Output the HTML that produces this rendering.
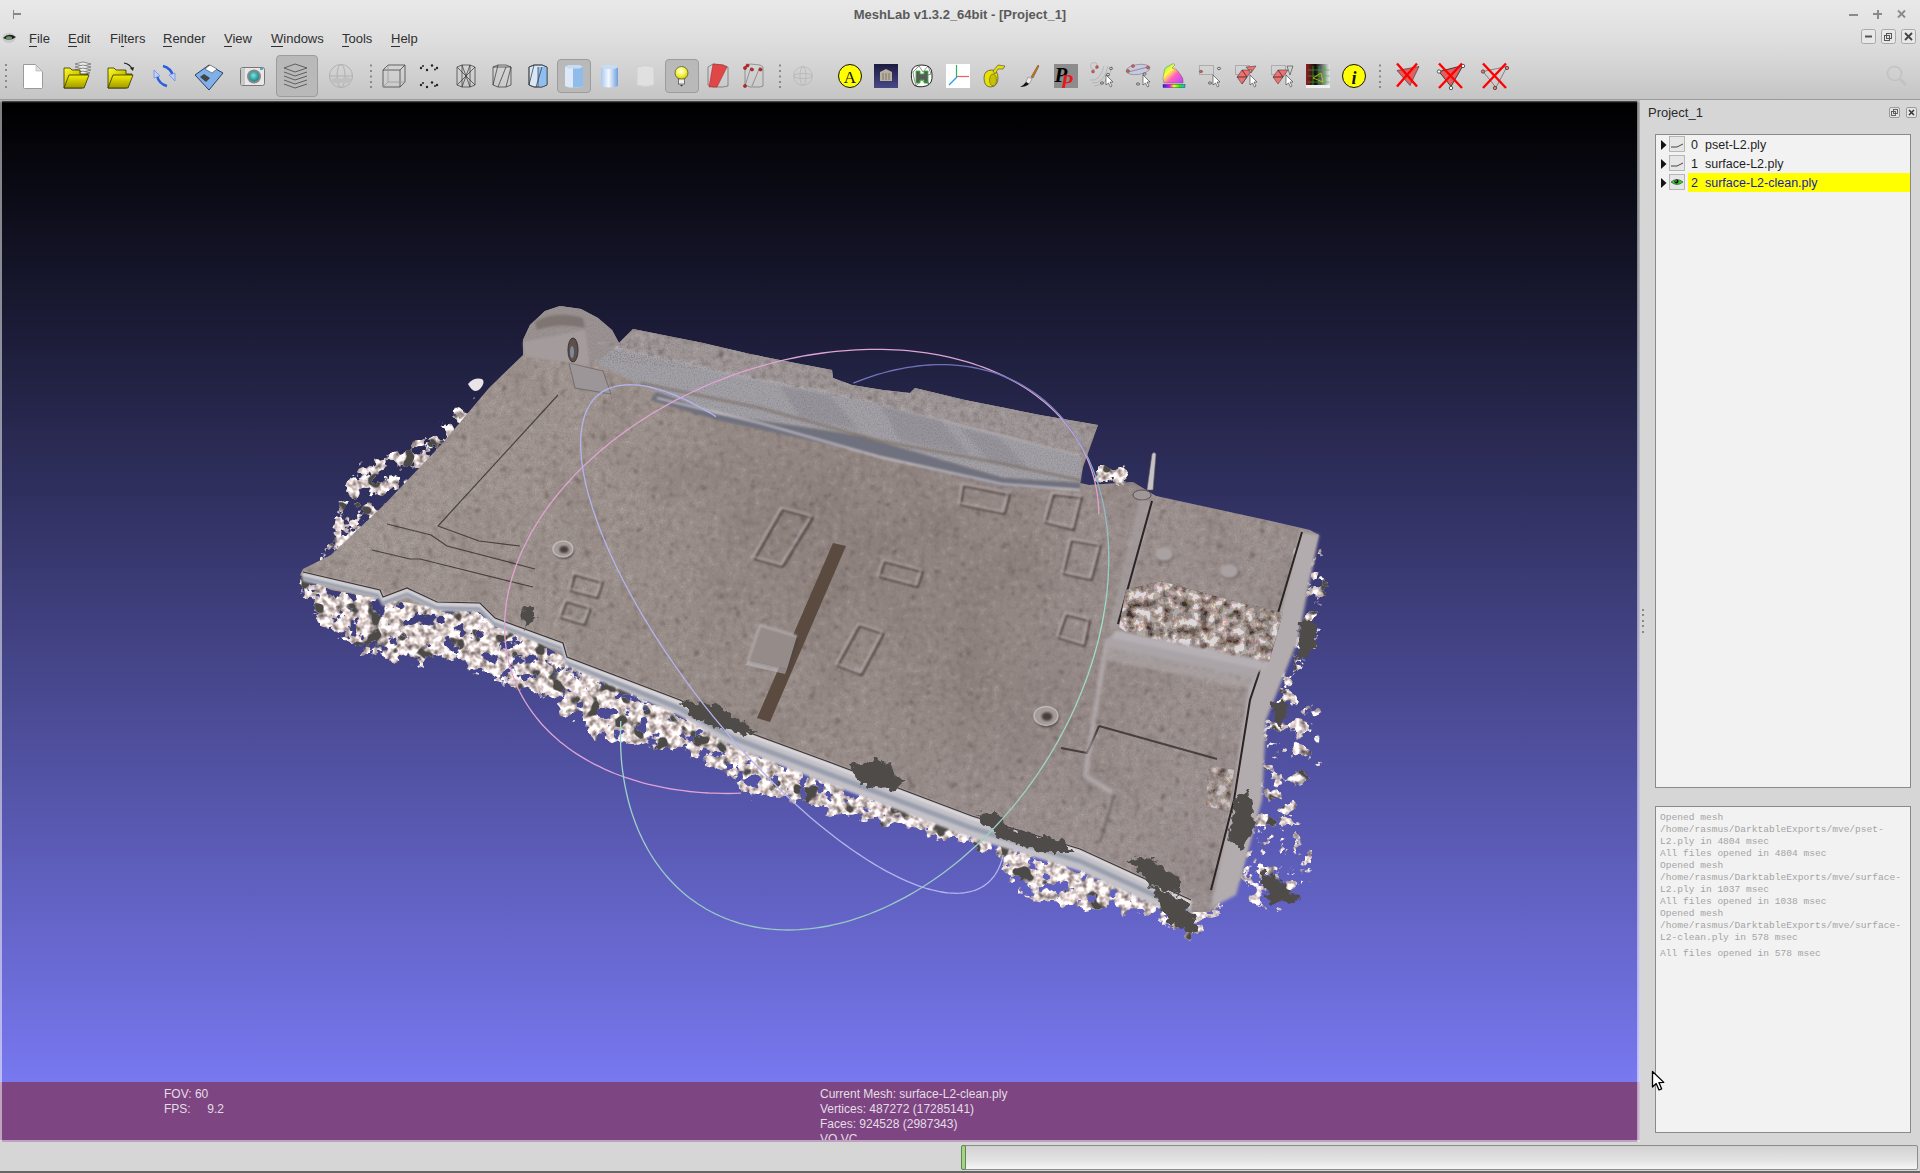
<!DOCTYPE html>
<html><head><meta charset="utf-8">
<style>
*{margin:0;padding:0;box-sizing:border-box}
html,body{width:1920px;height:1173px;overflow:hidden;background:#d6d6d6;font-family:"Liberation Sans",sans-serif}
.a{position:absolute}
#top{left:0;top:0;width:1920px;height:100px;background:linear-gradient(#e9e9e9 0px,#dedede 40px,#d2d2d2 70px,#c5c5c5 99px)}
#topline{left:0;top:99px;width:1920px;height:1px;background:#9c9c9c}
.title{left:0;top:7px;width:1920px;text-align:center;font-weight:bold;font-size:13px;color:#5a5a5a;letter-spacing:0px}
.menu{top:31px;font-size:13px;color:#303030}
.menu u{text-decoration:none;border-bottom:1px solid #303030}
#gl{left:0px;top:101px;width:1640px;height:1041px;background:linear-gradient(#000 2px,rgb(120,120,240) 981px,rgb(120,120,240))}
#glframe{left:0;top:100px;width:1640px;height:1043px;border:2px solid #b9b9b9;border-top:3px solid #a8a8a8}
#log{left:0px;top:1082px;width:1640px;height:60px;background:rgb(125,70,131)}
.lt{color:#e4dde4;font-size:12px;line-height:15px}
#panel{left:1640px;top:100px;width:280px;height:1042px;background:#d6d6d6}
.box{background:#f2f2f2;border:1px solid #8a8a8a}
.tree{font-size:12.5px;line-height:16px;color:#1e1e1e}
.mono{font-family:"Liberation Mono",monospace;font-size:9.57px;color:#a4a4a4;line-height:12px;white-space:pre}
#status{left:0;top:1142px;width:1920px;height:31px;background:#d6d6d6}
</style></head><body>
<div id="top" class="a"></div>
<div id="topline" class="a"></div>
<div class="a title">MeshLab v1.3.2_64bit - [Project_1]</div>
<div class="a" style="left:13px;top:10px;width:1px;height:9px;background:#888"></div>
<div class="a" style="left:14px;top:13px;width:7px;height:2px;background:#888"></div>
<!-- window controls -->
<div class="a" style="left:1849px;top:14px;width:9px;height:1.5px;background:#8a8a8a"></div>
<div class="a" style="left:1873px;top:13px;width:9px;height:2px;background:#8a8a8a"></div>
<div class="a" style="left:1876.5px;top:9.5px;width:2px;height:9px;background:#8a8a8a"></div>
<svg class="a" style="left:1896px;top:9px" width="12" height="12" viewBox="0 0 12 12"><g stroke="#8a8a8a" stroke-width="1.8"><line x1="2" y1="1.5" x2="9" y2="8.5"/><line x1="9" y1="1.5" x2="2" y2="8.5"/></g></svg>

<svg class="a" style="left:0;top:0" width="1920" height="100" viewBox="0 0 1920 100">
<defs>
<linearGradient id="fold" x1="0" y1="0" x2="1" y2="1"><stop offset="0" stop-color="#ffff30"/><stop offset="0.5" stop-color="#c8c000"/><stop offset="1" stop-color="#202000"/></linearGradient><linearGradient id="foldf" x1="0" y1="0" x2="0" y2="1"><stop offset="0" stop-color="#f4f000"/><stop offset="1" stop-color="#a09800"/></linearGradient>
<linearGradient id="cylb" x1="0" y1="0" x2="1" y2="0"><stop offset="0" stop-color="#a8c8f0"/><stop offset="0.45" stop-color="#f4f8ff"/><stop offset="1" stop-color="#6fa0dc"/></linearGradient>
<radialGradient id="bulb" cx="0.45" cy="0.35" r="0.6"><stop offset="0" stop-color="#ffffe8"/><stop offset="0.5" stop-color="#f8f860"/><stop offset="1" stop-color="#d8d000"/></radialGradient>
<radialGradient id="lens" cx="0.45" cy="0.4" r="0.6"><stop offset="0" stop-color="#80e0e0"/><stop offset="1" stop-color="#108888"/></radialGradient>
<linearGradient id="bun" x1="0" y1="0" x2="1" y2="1"><stop offset="0" stop-color="#40ff40"/><stop offset="0.35" stop-color="#ffff40"/><stop offset="0.6" stop-color="#ff60c0"/><stop offset="1" stop-color="#c040ff"/></linearGradient>
<linearGradient id="rainbow" x1="0" y1="0" x2="1" y2="0"><stop offset="0" stop-color="#2020ff"/><stop offset="0.3" stop-color="#ff00ff"/><stop offset="0.5" stop-color="#ffff00"/><stop offset="0.75" stop-color="#00ff00"/><stop offset="1" stop-color="#00c0ff"/></linearGradient>
<linearGradient id="dsq" x1="0" y1="0" x2="0" y2="1"><stop offset="0" stop-color="#1c1c40"/><stop offset="1" stop-color="#484888"/></linearGradient>
<linearGradient id="gridg" x1="0" y1="0" x2="1" y2="0"><stop offset="0" stop-color="#902020"/><stop offset="0.4" stop-color="#101010"/><stop offset="1" stop-color="#e8e8e8"/></linearGradient>
</defs>
<!-- grip -->
<g fill="#8a8a8a"><rect x="5" y="64" width="2" height="2"/><rect x="5" y="69" width="2" height="2"/><rect x="5" y="75" width="2" height="2"/><rect x="5" y="80" width="2" height="2"/><rect x="5" y="86" width="2" height="2"/></g>
<!-- new -->
<path d="M23.5,64.5 h12 l7,7 v16 q0,1 -1,1 h-17 q-1,0 -1,-1z" fill="#fff" stroke="#9a9a9a"/>
<path d="M36,65 v6 h6z" fill="#e0e0e0" stroke="#aaa" stroke-width="0.6"/>
<!-- open project -->
<g stroke="#666" stroke-width="0.7" fill="#eee"><path d="M75,64 l8,-2 l8,2 l-8,2z"/><path d="M75,67 l8,-2 l8,2 l-8,2z"/><path d="M75,70 l8,-2 l8,2 l-8,2z"/><path d="M76,73 l7,-2 l7,2 l-7,2z"/></g>
<path d="M64,68 h6 l2,2 h8 v4 h8 l-6,14 h-18z" fill="url(#fold)" stroke="#303000" stroke-width="0.8"/>
<path d="M64,88 l5,-13 h20 l-5,13z" fill="url(#foldf)" stroke="#303000" stroke-width="0.8"/>
<!-- open -->
<path d="M108,68 h6 l2,2 h10 v4 h6 l-6,14 h-18z" fill="url(#fold)" stroke="#303000" stroke-width="0.8"/>
<path d="M108,88 l5,-13 h20 l-5,13z" fill="url(#foldf)" stroke="#303000" stroke-width="0.8"/>
<path d="M124,63 q6,1 8,6" fill="none" stroke="#222" stroke-width="1.2"/><path d="M130,68 l3,3 l1,-4z" fill="#222"/>
<!-- reload -->
<path d="M163,66 q8,2 10,10" fill="none" stroke="#2a5ee0" stroke-width="2.5"/><path d="M169,75 l6,6 l0,-8z" fill="#b8d0ff" stroke="#5a7ad0" stroke-width="0.6"/>
<path d="M167,86 q-8,-2 -10,-10" fill="none" stroke="#2a5ee0" stroke-width="2.5"/><path d="M160,76 l-6,-6 l0,8z" fill="#b8d0ff" stroke="#5a7ad0" stroke-width="0.6"/>
<!-- save floppy -->
<path d="M195,75 l14,-10 l14,8 l-14,17z" fill="#7fb0ea" stroke="#203050" stroke-width="0.9"/>
<path d="M205,69 l5,-4 l7,4 l-5,4z" fill="#fff" stroke="#333" stroke-width="0.5"/>
<path d="M200,77 l4,-3 l6,4 l-4,4z" fill="#444"/>
<!-- camera -->
<rect x="240.5" y="67.5" width="24" height="18" rx="2" fill="#e8e8e8" stroke="#777"/>
<rect x="241" y="68" width="4" height="17" fill="#c8c8c8"/>
<circle cx="254" cy="76.5" r="7" fill="#888"/><circle cx="254" cy="76.5" r="5" fill="url(#lens)"/>
<rect x="260" y="68" width="3" height="2" fill="#5ac"/>
<!-- layers toggle -->
<rect x="276.5" y="55.5" width="41" height="41" rx="3.5" fill="#b9b9b9" stroke="#9c9c9c"/>
<g fill="none" stroke="#555" stroke-width="0.9"><path d="M284,68 l11,-4 l12,4 l-12,4z"/><path d="M284,72 l11,4 l12,-4"/><path d="M284,76 l11,4 l12,-4"/><path d="M284,80 l11,4 l12,-4"/><path d="M284,84 l11,4 l12,-4"/></g>
<!-- globe disabled -->
<g fill="none" stroke="#b0b0b0" stroke-width="1"><circle cx="341" cy="76" r="11.5"/><ellipse cx="341" cy="76" rx="4" ry="11.5"/><line x1="329.5" y1="76" x2="352.5" y2="76"/></g>
<path d="M331,80 q5,-4 10,-1 q5,-4 10,0 v4 h-20z" fill="#c0c0c0"/>
<!-- separator -->
<g fill="#8a8a8a"><rect x="370" y="64.5" width="2" height="2"/><rect x="370" y="70" width="2" height="2"/><rect x="370" y="75.5" width="2" height="2"/><rect x="370" y="81" width="2" height="2"/><rect x="370" y="86" width="2" height="2"/></g>
<!-- bbox -->
<g fill="none" stroke="#444" stroke-width="0.8"><path d="M383,70 l5,-5 h17 v17 l-5,5 h-17z"/><path d="M383,70 h17 l5,-5 M400,70 v17"/><path d="M388,65 v17 h17 M388,82 l-5,5" stroke="#999"/></g>
<!-- points -->
<g fill="#222"><circle cx="421" cy="68" r="1.2"/><circle cx="427" cy="70" r="1.2"/><circle cx="432" cy="65.5" r="1.2"/><circle cx="437" cy="68" r="1.2"/><circle cx="423" cy="66" r="1"/><circle cx="435" cy="69.5" r="1"/>
<circle cx="421" cy="85" r="1.2"/><circle cx="427" cy="87" r="1.2"/><circle cx="432" cy="82.5" r="1.2"/><circle cx="437" cy="85" r="1.2"/><circle cx="423" cy="83" r="1"/><circle cx="435" cy="86" r="1"/></g>
<!-- wire -->
<g fill="none" stroke="#333" stroke-width="0.7"><path d="M457,67 l5,-2 l8,0 l5,2 v18 l-5,2 h-8 l-5,-2z"/><path d="M457,67 l18,18 M475,67 l-18,18 M462,65 v22 M470,65 v22 M462,65 l8,22 M470,65 l-8,22"/></g>
<!-- flat lines -->
<g fill="none" stroke="#333" stroke-width="0.7"><path d="M493,67 l5,-2 l8,0 l5,2 v18 l-5,2 h-8 l-5,-2z"/><path d="M498,65 l-5,20 M506,67 l-8,20 M511,67 l-5,20 M493,67 l18,0"/></g>
<!-- flat blue -->
<path d="M529,67 l5,-2 l8,0 l5,2 v18 l-5,2 h-8 l-5,-2z" fill="#d8e8f8" stroke="#333" stroke-width="0.7"/>
<path d="M538,67 l9,0 v18 l-5,2 h-4z" fill="#8fbef0"/>
<g fill="none" stroke="#333" stroke-width="0.7"><path d="M529,67 l5,-2 l8,0 l5,2 v18 l-5,2 h-8 l-5,-2z"/><path d="M538,67 v20 M534,65 l-5,20 M542,67 l-6,20"/></g>
<!-- smooth toggle -->
<rect x="557.5" y="59.5" width="33" height="33" rx="3.5" fill="#b9b9b9" stroke="#9c9c9c"/>
<path d="M565,67 l4,-2 l10,0 l4,2 v19 l-4,1.5 h-10 l-4,-1.5z" fill="#dde9f7"/>
<path d="M573,66.5 h10 v19.5 l-4,1.5 h-6z" fill="#90bcec"/>
<path d="M565,67 l4,-2 l10,0 l4,2 l-4,1.5 h-10z" fill="#c8dcf4"/>
<!-- smooth cyl -->
<path d="M601,67 q8,-4 17,0 v19 q-8,3 -17,0z" fill="url(#cylb)"/>
<ellipse cx="609.5" cy="67" rx="8.5" ry="2" fill="#c8dcf4"/>
<!-- texture disabled -->
<path d="M637,67 q8,-3 17,0 v18 q-8,3 -17,0z" fill="#e0e0e0" stroke="#d0d0d0"/>
<!-- light toggle -->
<rect x="665.5" y="59.5" width="33" height="33" rx="3.5" fill="#b9b9b9" stroke="#9c9c9c"/>
<circle cx="681.5" cy="73" r="6.5" fill="url(#bulb)" stroke="#333" stroke-width="0.6"/>
<rect x="678.5" y="79" width="6" height="5" fill="#eee" stroke="#333" stroke-width="0.6"/><path d="M680,85 h3 l-1.5,1.5z" fill="#333"/>
<!-- red flat -->
<g fill="none" stroke="#555" stroke-width="0.6"><path d="M708,67 l5,-3 l10,1 l5,2 v19 l-5,1 h-10 l-5,-2z"/></g>
<path d="M713,64 l10,1 l4,2 l-10,20 h-8z" fill="#e04848" stroke="#a02020" stroke-width="0.5"/>
<!-- vertex sel -->
<g fill="none" stroke="#666" stroke-width="0.6"><path d="M745,67 l5,-3 l10,1 l3,2 v19 l-3,1 h-10 l-5,-2z M745,86 l6,-19 M752,86 l8,-19"/></g>
<g fill="#d02020" stroke="#600" stroke-width="0.4"><circle cx="745" cy="68" r="1.6"/><circle cx="747.5" cy="65.5" r="1.6"/><circle cx="752" cy="69.5" r="1.6"/><circle cx="760.5" cy="69.5" r="1.6"/><circle cx="745" cy="86" r="1.6"/></g>
<!-- separator -->
<g fill="#8a8a8a"><rect x="779" y="64.5" width="2" height="2"/><rect x="779" y="70" width="2" height="2"/><rect x="779" y="75.5" width="2" height="2"/><rect x="779" y="81" width="2" height="2"/><rect x="779" y="86" width="2" height="2"/></g>
<!-- globe2 disabled -->
<g fill="none" stroke="#b8b8b8" stroke-width="0.9"><circle cx="803" cy="76" r="9.3"/><ellipse cx="803" cy="76" rx="3" ry="9.3"/><ellipse cx="803" cy="76" rx="9.3" ry="2.5"/></g>
<!-- A -->
<circle cx="850" cy="76" r="11.5" fill="#ffff00" stroke="#111" stroke-width="1"/>
<text x="850" y="83" text-anchor="middle" font-family="Liberation Serif" font-size="17" fill="#111">A</text>
<!-- dark square -->
<rect x="874" y="64" width="24" height="24" fill="url(#dsq)"/>
<path d="M880,72 l6,-3 l6,3 v9 h-12z" fill="#b8b0a0"/><g stroke="#706858" stroke-width="0.8"><line x1="883" y1="73" x2="883" y2="80"/><line x1="886" y1="73" x2="886" y2="80"/><line x1="889" y1="73" x2="889" y2="80"/></g>
<!-- mesh H -->
<path d="M912,70 q2,-5 10,-5 q10,0 10,9 q1,10 -6,12 q-8,2 -12,-1 q-4,-6 -2,-15z" fill="#fff" stroke="#111" stroke-width="0.9"/>
<g stroke="#222" stroke-width="0.5" fill="none"><path d="M913,72 l6,-6 l4,6 l5,-6 l3,8 l-6,2 l4,8 l-8,-4 l-5,6 l-2,-8z"/></g>
<path d="M916,71 h4 v3 h4 v-3 h4 v12 h-4 v-3 h-4 v3 h-4z" fill="#5a5a5a" stroke="#30c030" stroke-width="0.9"/>
<!-- axes -->
<rect x="946" y="64" width="24" height="24" fill="#fff"/>
<line x1="956.5" y1="65" x2="956.5" y2="77" stroke="#30b060" stroke-width="1.2"/>
<line x1="957" y1="76.5" x2="969" y2="76.5" stroke="#f06060" stroke-width="1.2"/>
<line x1="957" y1="77" x2="949" y2="85" stroke="#20a0f0" stroke-width="1.3"/>
<!-- tape -->
<path d="M984,78 q0,-8 8,-8 q6,0 6,8 q0,8 -7,9 q-7,0 -7,-9z" fill="#e8e000" stroke="#444" stroke-width="0.7"/>
<path d="M993,71 l5,-6 l7,1 l-2,3 l-5,0 l-3,5z" fill="#e8e000" stroke="#444" stroke-width="0.6"/>
<ellipse cx="993" cy="80" rx="3.5" ry="6" fill="#c8c000" stroke="#444" stroke-width="0.5"/>
<!-- brush -->
<path d="M1038,65 l-7,12 l2,1 l6,-12z" fill="#c87820" stroke="#604010" stroke-width="0.5"/>
<path d="M1028,77 l4,2 l-3,5 l-3,-2z" fill="#eee" stroke="#666" stroke-width="0.5"/>
<path d="M1026,82 l3,2 q-3,3 -9,3 q4,-2 6,-5z" fill="#111"/>
<!-- PP -->
<rect x="1054" y="64" width="24" height="24" fill="#8c8c8c"/>
<clipPath id="ppc"><rect x="1054" y="64" width="24" height="24"/></clipPath><g clip-path="url(#ppc)"><text x="1054.5" y="82" font-family="Liberation Serif" font-style="italic" font-weight="bold" font-size="21" fill="#000">P</text>
<text x="1060.5" y="88.5" font-family="Liberation Serif" font-style="italic" font-weight="bold" font-size="20" fill="#e81818">P</text></g>
<!-- sel pts -->
<g fill="none" stroke="#aaa" stroke-width="0.7"><circle cx="1094" cy="66" r="3.5"/><path d="M1090,80 q10,2 14,-14 M1092,83 q12,1 16,-17 M1094,86 q14,0 18,-20"/></g>
<g fill="#e05050" stroke="#555" stroke-width="0.4"><circle cx="1097" cy="67" r="1.5"/><circle cx="1093" cy="71.5" r="1.5"/></g>
<g fill="none" stroke="#444" stroke-width="0.7"><ellipse cx="1111" cy="68.5" rx="1.6" ry="1.2"/><ellipse cx="1108" cy="74.5" rx="1.6" ry="1.2"/><ellipse cx="1102" cy="83" rx="1.6" ry="1.2"/></g>
<path d="M1106,75 v10 l2.5,-2 l2,4 l1.5,-1 l-2,-4 h3z" fill="#fff" stroke="#333" stroke-width="0.6"/>
<!-- ellipse sel -->
<ellipse cx="1138" cy="69.5" rx="12" ry="5" transform="rotate(-8 1138 69.5)" fill="#c8c8e0" stroke="#888" stroke-width="0.7"/>
<line x1="1128" y1="72" x2="1148" y2="67" stroke="#555" stroke-width="0.5"/>
<g fill="#e05050" stroke="#555" stroke-width="0.4"><circle cx="1133" cy="66" r="1.6"/><circle cx="1148" cy="67.5" r="1.6"/><circle cx="1128" cy="71" r="1.6"/></g>
<g fill="none" stroke="#444" stroke-width="0.7"><ellipse cx="1144.5" cy="74" rx="1.6" ry="1.2"/><ellipse cx="1138" cy="84" rx="1.6" ry="1.2"/></g>
<path d="M1143,75 v10 l2.5,-2 l2,4 l1.5,-1 l-2,-4 h3z" fill="#fff" stroke="#333" stroke-width="0.6"/>
<!-- bunny -->
<path d="M1164,73 q0,-6 5,-7 l3,-2 q2,-1 3,1 l-3,3 q5,0 8,6 q4,4 3,9 h-19 q-2,-4 0,-10z" fill="url(#bun)" stroke="#555" stroke-width="0.4"/>
<rect x="1163" y="84.5" width="22" height="3" fill="url(#rainbow)" stroke="#224" stroke-width="0.4"/>
<!-- rect sel -->
<rect x="1199.5" y="65.5" width="14" height="9" fill="none" stroke="#666" stroke-width="0.7" stroke-dasharray="1,1"/>
<ellipse cx="1201" cy="71.5" rx="1.6" ry="1.2" fill="#e05050" stroke="#555" stroke-width="0.5"/>
<g fill="none" stroke="#444" stroke-width="0.7"><ellipse cx="1219" cy="68.5" rx="1.6" ry="1.2"/><ellipse cx="1210" cy="83" rx="1.6" ry="1.2"/></g>
<path d="M1213,75 v10 l2.5,-2 l2,4 l1.5,-1 l-2,-4 h3z" fill="#fff" stroke="#333" stroke-width="0.6"/>
<!-- face sel 1 -->
<rect x="1235.5" y="65.5" width="14" height="9" fill="none" stroke="#666" stroke-width="0.7" stroke-dasharray="1,1"/>
<path d="M1237,77 l5,-7 l5,7z M1242,70 l5,7 l5,-7z M1246,67 l10,-1 l-5,7z M1237,77 l5,7 l5,-7z" fill="#f07070" stroke="#333" stroke-width="0.5"/>
<path d="M1242,84 l5,-7" stroke="#333" stroke-width="0.5"/>
<path d="M1250,75 v10 l2.5,-2 l2,4 l1.5,-1 l-2,-4 h3z" fill="#fff" stroke="#333" stroke-width="0.6"/>
<!-- face sel 2 -->
<rect x="1271.5" y="65.5" width="14" height="9" fill="none" stroke="#666" stroke-width="0.7" stroke-dasharray="1,1"/>
<path d="M1273,77 l5,-7 l5,7z M1278,70 l5,7 l5,-7z M1273,77 l5,7 l5,-7z" fill="#f07070" stroke="#333" stroke-width="0.5"/>
<path d="M1287,66 h6 l-3,9z" fill="none" stroke="#555" stroke-width="0.7"/>
<path d="M1286,75 v10 l2.5,-2 l2,4 l1.5,-1 l-2,-4 h3z" fill="#fff" stroke="#333" stroke-width="0.6"/>
<!-- grid image -->
<rect x="1306" y="64" width="24" height="24" fill="url(#gridg)"/>
<rect x="1306" y="85" width="24" height="3" fill="#f0f0f0"/>
<g stroke="#30c030" stroke-width="0.6" fill="none"><path d="M1308,70 h22 M1308,76 h22 M1308,82 h22 M1313,66 v19 M1319,66 v19 M1325,66 v19"/></g>
<path d="M1313,78 l8,-5 l2,9z" fill="none" stroke="#d0d000" stroke-width="0.8"/>
<!-- info -->
<circle cx="1354" cy="76" r="11.5" fill="#ffff00" stroke="#111" stroke-width="1"/>
<text x="1354" y="84" text-anchor="middle" font-family="Liberation Serif" font-style="italic" font-weight="bold" font-size="18" fill="#111">i</text>
<!-- separator -->
<g fill="#8a8a8a"><rect x="1379" y="64.5" width="2" height="2"/><rect x="1379" y="70" width="2" height="2"/><rect x="1379" y="75.5" width="2" height="2"/><rect x="1379" y="81" width="2" height="2"/><rect x="1379" y="86" width="2" height="2"/></g>
<!-- X1 -->
<path d="M1397,70.5 l22,-4 l-9,19z" fill="#e06060" stroke="#333" stroke-width="0.6"/>
<g stroke="#ff0000" stroke-width="2.4"><line x1="1397" y1="63.5" x2="1417" y2="86.5"/><line x1="1417" y1="63.5" x2="1397" y2="86.5"/></g>
<!-- X2 -->
<path d="M1439,71.5 l24,-6 l-12,21z" fill="#e06060" stroke="#222" stroke-width="0.8"/>
<g fill="#fff" stroke="#222" stroke-width="0.7"><circle cx="1439" cy="71.5" r="1.7"/><circle cx="1463" cy="66" r="1.7"/><circle cx="1451" cy="88" r="1.7"/></g>
<g stroke="#ff0000" stroke-width="2.4"><line x1="1439" y1="63.5" x2="1462" y2="88"/><line x1="1462" y1="63.5" x2="1439" y2="88"/></g>
<!-- X3 -->
<path d="M1483,71.5 l24,-5 l-11,21z" fill="none" stroke="#333" stroke-width="0.5"/>
<g fill="#f07070" stroke="#222" stroke-width="0.6"><circle cx="1483" cy="71.5" r="1.7"/><circle cx="1507" cy="68" r="1.7"/><circle cx="1495" cy="88" r="1.7"/></g>
<g stroke="#ff0000" stroke-width="2.4"><line x1="1483" y1="63.5" x2="1506" y2="88"/><line x1="1506" y1="63.5" x2="1483" y2="88"/></g>
<!-- search -->
<g fill="none" stroke="#c2c2c2" stroke-width="1.6"><circle cx="1894.5" cy="73.5" r="7"/><line x1="1900" y1="79" x2="1906" y2="85" stroke-width="3"/></g>
<!-- mdi buttons -->
<g fill="#e8e8e8" stroke="#9a9a9a" stroke-width="0.8"><rect x="1861.5" y="29.5" width="14" height="14" rx="2"/><rect x="1881.5" y="29.5" width="14" height="14" rx="2"/><rect x="1901.5" y="29.5" width="14" height="14" rx="2"/></g>
<rect x="1865" y="35.5" width="7" height="2" fill="#555"/>
<g fill="none" stroke="#555" stroke-width="1"><rect x="1884.5" y="35.5" width="5" height="5"/><rect x="1886.5" y="33.5" width="5" height="5"/></g>
<g stroke="#444" stroke-width="1.8"><line x1="1905" y1="33" x2="1912" y2="40"/><line x1="1912" y1="33" x2="1905" y2="40"/></g>
<!-- eye app icon -->
<ellipse cx="9" cy="38" rx="6.5" ry="5" fill="#c8c8c8"/>
<path d="M3,38 q6,-6 13,-1 q-6,5 -13,1z" fill="#222"/><ellipse cx="9" cy="38" rx="3" ry="1.8" fill="#6a9a6a"/>
</svg>

<!-- menu -->
<div class="a menu" style="left:29px"><u>F</u>ile</div>
<div class="a menu" style="left:68px"><u>E</u>dit</div>
<div class="a menu" style="left:110px">Fi<u>l</u>ters</div>
<div class="a menu" style="left:163px"><u>R</u>ender</div>
<div class="a menu" style="left:224px"><u>V</u>iew</div>
<div class="a menu" style="left:271px"><u>W</u>indows</div>
<div class="a menu" style="left:342px"><u>T</u>ools</div>
<div class="a menu" style="left:391px"><u>H</u>elp</div>

<div id="gl" class="a"></div>
<svg class="a" style="left:0;top:0" width="1640" height="1143" viewBox="0 0 1640 1143">
<defs>
<clipPath id="glc"><rect x="2" y="103" width="1635" height="979"/></clipPath>
<filter id="grain" x="0" y="0" width="100%" height="100%"><feTurbulence type="fractalNoise" baseFrequency="0.7" numOctaves="2" seed="3"/><feColorMatrix values="0 0 0 0 0.25  0 0 0 0 0.22  0 0 0 0 0.21  0 0 0 -1.6 0.95"/><feComposite in2="SourceGraphic" operator="in"/></filter>
<filter id="spk" x="-10%" y="-10%" width="120%" height="120%" color-interpolation-filters="sRGB">
 <feGaussianBlur in="SourceAlpha" stdDeviation="7" result="b"/>
 <feTurbulence type="fractalNoise" baseFrequency="0.075" numOctaves="4" seed="11" result="t"/>
 <feColorMatrix in="t" type="matrix" values="0 0 0 0 0  0 0 0 0 0  0 0 0 0 0  1 0 0 0 0" result="ta"/>
 <feComposite in="ta" in2="b" operator="arithmetic" k2="1" k3="1" k4="-0.82" result="c"/>
 <feComponentTransfer in="c" result="th"><feFuncA type="linear" slope="20" intercept="-8.6"/></feComponentTransfer>
 <feTurbulence type="fractalNoise" baseFrequency="0.16" numOctaves="2" seed="5" result="t2"/>
 <feColorMatrix in="t2" type="matrix" values="1.25 0 0 0 0.25  1.25 0 0 0 0.2  1.25 0 0 0 0.19  0 0 0 0 1" result="col"/>
 <feComposite in="col" in2="th" operator="in" result="lt"/>
 <feTurbulence type="fractalNoise" baseFrequency="0.06" numOctaves="2" seed="21" result="t3"/>
 <feColorMatrix in="t3" type="matrix" values="0 0 0 0 0.30  0 0 0 0 0.29  0 0 0 0 0.28  0 0 14 0 -8.3" result="dk"/>
 <feComposite in="dk" in2="th" operator="in" result="dk2"/>
 <feMerge><feMergeNode in="lt"/><feMergeNode in="dk2"/></feMerge>
</filter>
<filter id="spkh" x="-10%" y="-10%" width="120%" height="120%" color-interpolation-filters="sRGB">
 <feTurbulence type="fractalNoise" baseFrequency="0.11" numOctaves="3" seed="4" result="t2"/>
 <feColorMatrix in="t2" type="matrix" values="1.5 0 0 0 -0.12  1.5 0 0 0 -0.17  1.5 0 0 0 -0.2  0 0 0 0 1" result="col0"/>
 <feComponentTransfer in="col0" result="col"><feFuncR type="discrete" tableValues="0.22 0.4 0.55 0.68 0.86"/><feFuncG type="discrete" tableValues="0.2 0.38 0.53 0.66 0.85"/><feFuncB type="discrete" tableValues="0.2 0.38 0.53 0.67 0.88"/></feComponentTransfer><feOffset in="col" dx="0" dy="0" result="col2"/>
 <feComposite in="col" in2="SourceAlpha" operator="in"/>
</filter>
<filter id="mottle" x="0" y="0" width="100%" height="100%" color-interpolation-filters="sRGB">
 <feTurbulence type="fractalNoise" baseFrequency="0.02" numOctaves="3" seed="9" result="t"/>
 <feColorMatrix in="t" type="matrix" values="0 0 0 0 0.3  0 0 0 0 0.25  0 0 0 0 0.24  2.2 0 0 0 -1.0" result="m"/>
 <feComposite in="m" in2="SourceAlpha" operator="in"/>
</filter>
<filter id="spots" x="0" y="0" width="100%" height="100%" color-interpolation-filters="sRGB">
 <feTurbulence type="fractalNoise" baseFrequency="0.12" numOctaves="2" seed="13" result="t"/>
 <feColorMatrix in="t" type="matrix" values="0 0 0 0 0.35  0 0 0 0 0.28  0 0 0 0 0.27  0 0 0 10 -6.9" result="m0"/><feGaussianBlur in="m0" stdDeviation="1.2" result="m"/>
 <feComposite in="m" in2="SourceAlpha" operator="in"/>
</filter>
<filter id="tex" x="0" y="0" width="100%" height="100%" color-interpolation-filters="sRGB">
 <feTurbulence type="fractalNoise" baseFrequency="0.15" numOctaves="3" seed="17" result="t"/>
 <feColorMatrix in="t" type="matrix" values="0 0 0 0 0.3  0 0 0 0 0.26  0 0 0 0 0.25  3 0 0 0 -1.55" result="dk"/>
 <feColorMatrix in="t" type="matrix" values="0 0 0 0 0.9  0 0 0 0 0.87  0 0 0 0 0.86  -3 0 0 0 1.25" result="lt"/>
 <feMerge result="m"><feMergeNode in="dk"/><feMergeNode in="lt"/></feMerge>
 <feComposite in="m" in2="SourceAlpha" operator="in"/>
</filter>
<filter id="rough" x="-20%" y="-20%" width="140%" height="140%">
 <feTurbulence type="fractalNoise" baseFrequency="0.15" numOctaves="2" seed="2" result="t"/>
 <feDisplacementMap in="SourceGraphic" in2="t" scale="12" xChannelSelector="R" yChannelSelector="G"/>
</filter>
<filter id="blur1"><feGaussianBlur stdDeviation="0.8"/></filter>
<filter id="blur2"><feGaussianBlur stdDeviation="1.6"/></filter>
<filter id="blur20"><feGaussianBlur stdDeviation="40"/></filter>
<linearGradient id="slabg" x1="300" y1="350" x2="1300" y2="900" gradientUnits="userSpaceOnUse">
 <stop offset="0" stop-color="#aa9f9b"/><stop offset="0.45" stop-color="#9b8f8a"/><stop offset="1" stop-color="#a09595"/></linearGradient>
<linearGradient id="tgrad" x1="0" y1="360" x2="0" y2="940" gradientUnits="userSpaceOnUse"><stop offset="0" stop-color="#6c6cb8"/><stop offset="0.22" stop-color="#8fb0c8"/><stop offset="0.45" stop-color="#a0e0c8"/><stop offset="1" stop-color="#98c8c4"/></linearGradient>
<radialGradient id="boss"><stop offset="0" stop-color="#3a3030"/><stop offset="0.35" stop-color="#5a5050"/><stop offset="0.6" stop-color="#a8a0a0"/><stop offset="0.85" stop-color="#8a8080"/><stop offset="1" stop-color="#403838"/></radialGradient>
</defs>
<g clip-path="url(#glc)">
<polygon points="470,395 500,398 452,455 395,515 342,565 314,579 285,585 292,572 315,548 325,522 338,500 344,460 395,443 425,426 455,400" fill="#000" fill-opacity="0.78" filter="url(#spk)"/>
<path d="M468,384 q6,-7 14,-5 q4,3 -2,10 q-6,6 -12,-5z" fill="#e8e4e8"/>
<polygon points="286,575 330,570 430,590 566,640 734,735 972,825 1200,905 1240,880 1262,860 1197,947 1159,927 1122,918 1059,912 1008,892 993,861 948,849 907,833 829,821 793,803 752,803 719,776 680,759 593,741 557,714 525,693 471,680 459,663 408,672 360,657 316,631" fill="#000" fill-opacity="0.9" filter="url(#spk)"/>
<polygon points="1319,530 1335,570 1330,629 1305,680 1325,700 1325,765 1305,800 1325,887 1261,928 1225,880 1240,800 1245,720 1280,640 1300,560" fill="#000" fill-opacity="0.7" filter="url(#spk)"/>
<polygon points="523,355 523,340 530,325 545,311 560,306 581,309 598,318 612,330 619,343 633,329 703,343 750,354 790,362 832,370 833,378 852,385 883,390 910,393 915,388 965,400 1040,415 1098,425 1083,467 1080,483 1089,485 1133,482 1156,496 1271,521 1310,530 1319,535 1300,600 1296,640 1275,690 1262,720 1259,800 1240,880 1210,912 1191,912 1080,858 972,824 829,770 734,734 680,708 566,658 483,612 429,606 378,598 331,590 300,575 303,569 331,555 384,505 441,445 489,388" fill="url(#slabg)"/>
<g filter="url(#blur20)" opacity="0.22"><ellipse cx="900" cy="560" rx="170" ry="80" fill="#6c5c58"/><ellipse cx="1010" cy="700" rx="120" ry="60" fill="#6c5c58"/><ellipse cx="780" cy="470" rx="90" ry="40" fill="#6c5c58"/></g>
<polygon points="523,355 523,340 530,325 545,311 560,306 581,309 598,318 612,330 619,343 633,329 703,343 750,354 790,362 832,370 833,378 852,385 883,390 910,393 915,388 965,400 1040,415 1098,425 1083,467 1080,483 1089,485 1133,482 1156,496 1271,521 1310,530 1319,535 1300,600 1296,640 1275,690 1262,720 1259,800 1240,880 1210,912 1191,912 1080,858 972,824 829,770 734,734 680,708 566,658 483,612 429,606 378,598 331,590 300,575 303,569 331,555 384,505 441,445 489,388" fill="#000" filter="url(#mottle)" opacity="0.12"/>
<polygon points="523,355 523,340 530,325 545,311 560,306 581,309 598,318 612,330 619,343 633,329 703,343 750,354 790,362 832,370 833,378 852,385 883,390 910,393 915,388 965,400 1040,415 1098,425 1083,467 1080,483 1089,485 1133,482 1156,496 1271,521 1310,530 1319,535 1300,600 1296,640 1275,690 1262,720 1259,800 1240,880 1210,912 1191,912 1080,858 972,824 829,770 734,734 680,708 566,658 483,612 429,606 378,598 331,590 300,575 303,569 331,555 384,505 441,445 489,388" fill="#000" filter="url(#tex)" opacity="0.22"/>
<polygon points="523,355 523,340 530,325 545,311 560,306 581,309 598,318 612,330 619,343 633,329 703,343 750,354 790,362 832,370 833,378 852,385 883,390 910,393 915,388 965,400 1040,415 1098,425 1083,467 1080,483 1089,485 1133,482 1156,496 1271,521 1310,530 1319,535 1300,600 1296,640 1275,690 1262,720 1259,800 1240,880 1210,912 1191,912 1080,858 972,824 829,770 734,734 680,708 566,658 483,612 429,606 378,598 331,590 300,575 303,569 331,555 384,505 441,445 489,388" fill="#000" filter="url(#spots)" opacity="0.5"/>
<polygon points="523,355 523,340 530,325 545,311 560,306 581,309 598,318 612,330 619,343 633,329 703,343 750,354 790,362 832,370 833,378 852,385 883,390 910,393 915,388 965,400 1040,415 1098,425 1083,467 1080,483 1089,485 1133,482 1156,496 1271,521 1310,530 1319,535 1300,600 1296,640 1275,690 1262,720 1259,800 1240,880 1210,912 1191,912 1080,858 972,824 829,770 734,734 680,708 566,658 483,612 429,606 378,598 331,590 300,575 303,569 331,555 384,505 441,445 489,388" fill="#000" filter="url(#grain)"/>
<polygon points="303,572 380,590 383,597 407,588 437,602 480,603 495,618 563,643 567,657 680,700 734,727 829,762 972,816 1080,849 1191,900 1191,922 1080,871 972,838 829,784 734,747.613 680,715.933 567,666 563,652 495,627 480,612 437,611 407,597 383,606 380,599 303,581" fill="#c4c2c8" filter="url(#blur1)"/>
<polyline points="303,576.95 380,594.95 383,601.95 407,592.95 437,606.95 480,607.95 495,622.95 563,647.95 567,661.95 680,708.763 734,738.337 829,774.1 972,828.1 1080,861.1 1191,912.1" fill="none" stroke="#8e96a8" stroke-width="5" stroke-opacity="0.8" filter="url(#blur1)"/>
<polyline points="303,574.5 380,592.5 383,599.5 407,590.5 437,604.5 480,605.5 495,620.5 563,645.5 567,659.5 680,702.5 734,729.5 829,764.5 972,818.5 1080,851.5 1191,902.5" fill="none" stroke="#e2dee2" stroke-width="3" stroke-opacity="0.8" filter="url(#blur1)"/>
<polyline points="303,572 380,590 383,597 407,588 437,602 480,603 495,618 563,643 567,657 680,700 734,727 829,762 972,816 1080,849 1191,900" fill="none" stroke="#3c3434" stroke-width="1.2"/>
<polygon points="584,341 619,343 633,329 703,343 750,354 790,362 832,370 833,378 852,385 883,390 910,393 915,388 965,400 1040,415 1098,425 1082,457 1007,433 800,388 719,371" fill="#a09899"/>
<polygon points="586,341 724,372 860,400 1007,436 1082,457 1080,483 1003,478 860,436 716,414 657,392 600,365" fill="#a2a1a9" filter="url(#blur1)"/>
<polygon points="586,341 724,372 860,400 1007,436 1082,457 1080,483 1003,478 860,436 716,414 657,392 600,365" fill="#000" filter="url(#grain)"/>
<polygon points="657,392 716,414 860,436 1003,478 1080,483 1080,489 1003,486 860,451 716,420 650,400" fill="#70717e" filter="url(#blur1)"/>
<polyline points="585,341 724,372 860,399 1082,456" fill="none" stroke="#c8c4cc" stroke-width="2" stroke-opacity="0.5" filter="url(#blur1)"/>
<polyline points="657,398 760,423 880,457 1002,484 1080,490" fill="none" stroke="#d0ccd4" stroke-width="2" stroke-opacity="0.8" filter="url(#blur1)"/>
<polyline points="640,383 760,408 880,441 999,463 1080,480" fill="none" stroke="#7a6a60" stroke-width="3" stroke-opacity="0.6" filter="url(#blur1)"/>
<g filter="url(#blur2)" opacity="0.2" fill="#6a6470"><polygon points="780,386 830,396 860,430 800,418"/><polygon points="880,405 940,420 970,455 900,440"/><polygon points="960,428 1000,438 1030,470 990,462"/></g>
<polygon points="569,363 603,371 611,394 575,388" fill="#9c9698" stroke="#6a6468" stroke-width="0.8"/>
<polygon points="523,355 523,340 530,325 545,311 560,306 581,309 598,318 612,330 619,343 600,360 560,352" fill="#9b9393"/>
<polygon points="584,341 619,343 633,329 703,343 750,354 790,362 832,370 833,378 852,385 883,390 910,393 915,388 965,400 1040,415 1098,425 1082,457 1007,433 800,388 719,371 523,355 523,340 530,325 545,311 560,306 581,309 598,318 612,330 619,343 600,360 560,352" fill="#000" filter="url(#grain)"/>
<polygon points="584,341 619,343 633,329 703,343 750,354 790,362 832,370 833,378 852,385 883,390 910,393 915,388 965,400 1040,415 1098,425 1082,457 1007,433 800,388 719,371" fill="#000" filter="url(#tex)" opacity="0.25"/>
<polygon points="584,341 619,343 633,329 703,343 750,354 790,362 832,370 833,378 852,385 883,390 910,393 915,388 965,400 1040,415 1098,425 1082,457 1007,433 800,388 719,371" fill="#000" filter="url(#spots)" opacity="0.5"/>
<path d="M535,322 q20,-12 48,-4 l2,10 q-25,-6 -48,2z" fill="#7e7472" filter="url(#blur1)"/>
<polygon points="523,342 585,330 590,366 525,356" fill="#a49c9c" filter="url(#blur1)"/>
<ellipse cx="573" cy="350" rx="5" ry="12" fill="#5e5048" stroke="#3a3030" stroke-width="1"/>
<ellipse cx="572" cy="352" rx="2" ry="6" fill="#7a8aa0"/>
<polygon points="782,509 812,517 782,566 754,558" fill="none" stroke="#2a2222" stroke-opacity="0.85" stroke-width="1.6" stroke-linejoin="round" transform="translate(0.8,1)" filter="url(#blur1)"/>
<polygon points="782,509 812,517 782,566 754,558" fill="none" stroke="#cfc8c8" stroke-opacity="0.5" stroke-width="2.2" stroke-linejoin="round" transform="translate(-1,-1.2)" filter="url(#blur1)"/>
<polygon points="884,561 922,571 917,586 879,576" fill="none" stroke="#2a2222" stroke-opacity="0.85" stroke-width="1.6" stroke-linejoin="round" transform="translate(0.8,1)" filter="url(#blur1)"/>
<polygon points="884,561 922,571 917,586 879,576" fill="none" stroke="#cfc8c8" stroke-opacity="0.5" stroke-width="2.2" stroke-linejoin="round" transform="translate(-1,-1.2)" filter="url(#blur1)"/>
<polygon points="859,625 883,633 861,674 837,665" fill="none" stroke="#2a2222" stroke-opacity="0.85" stroke-width="1.6" stroke-linejoin="round" transform="translate(0.8,1)" filter="url(#blur1)"/>
<polygon points="859,625 883,633 861,674 837,665" fill="none" stroke="#cfc8c8" stroke-opacity="0.5" stroke-width="2.2" stroke-linejoin="round" transform="translate(-1,-1.2)" filter="url(#blur1)"/>
<polygon points="963,485 1009,494 1004,513 960,504" fill="none" stroke="#2a2222" stroke-opacity="0.85" stroke-width="1.6" stroke-linejoin="round" transform="translate(0.8,1)" filter="url(#blur1)"/>
<polygon points="963,485 1009,494 1004,513 960,504" fill="none" stroke="#cfc8c8" stroke-opacity="0.5" stroke-width="2.2" stroke-linejoin="round" transform="translate(-1,-1.2)" filter="url(#blur1)"/>
<polygon points="1053,494 1081,497 1073,529 1045,522" fill="none" stroke="#2a2222" stroke-opacity="0.85" stroke-width="1.6" stroke-linejoin="round" transform="translate(0.8,1)" filter="url(#blur1)"/>
<polygon points="1053,494 1081,497 1073,529 1045,522" fill="none" stroke="#cfc8c8" stroke-opacity="0.5" stroke-width="2.2" stroke-linejoin="round" transform="translate(-1,-1.2)" filter="url(#blur1)"/>
<polygon points="1071,540 1100,545 1091,579 1063,573" fill="none" stroke="#2a2222" stroke-opacity="0.85" stroke-width="1.6" stroke-linejoin="round" transform="translate(0.8,1)" filter="url(#blur1)"/>
<polygon points="1071,540 1100,545 1091,579 1063,573" fill="none" stroke="#cfc8c8" stroke-opacity="0.5" stroke-width="2.2" stroke-linejoin="round" transform="translate(-1,-1.2)" filter="url(#blur1)"/>
<polygon points="1066,614 1089,620 1084,645 1058,637" fill="none" stroke="#2a2222" stroke-opacity="0.85" stroke-width="1.6" stroke-linejoin="round" transform="translate(0.8,1)" filter="url(#blur1)"/>
<polygon points="1066,614 1089,620 1084,645 1058,637" fill="none" stroke="#cfc8c8" stroke-opacity="0.5" stroke-width="2.2" stroke-linejoin="round" transform="translate(-1,-1.2)" filter="url(#blur1)"/>
<polygon points="566,601 590,608 584,624 560,617" fill="none" stroke="#2a2222" stroke-opacity="0.85" stroke-width="1.6" stroke-linejoin="round" transform="translate(0.8,1)" filter="url(#blur1)"/>
<polygon points="566,601 590,608 584,624 560,617" fill="none" stroke="#cfc8c8" stroke-opacity="0.5" stroke-width="2.2" stroke-linejoin="round" transform="translate(-1,-1.2)" filter="url(#blur1)"/>
<polygon points="574,574 602,582 597,597 570,590" fill="none" stroke="#2a2222" stroke-opacity="0.85" stroke-width="1.6" stroke-linejoin="round" transform="translate(0.8,1)" filter="url(#blur1)"/>
<polygon points="574,574 602,582 597,597 570,590" fill="none" stroke="#cfc8c8" stroke-opacity="0.5" stroke-width="2.2" stroke-linejoin="round" transform="translate(-1,-1.2)" filter="url(#blur1)"/>
<polygon points="833,543 846,546 770,722 757,718" fill="#5a4a40"/>
<polygon points="760,625 797,636 787,669 748,660" fill="#4a4040" fill-opacity="0.6" transform="translate(1.5,2)" filter="url(#blur1)"/>
<polygon points="760,625 797,636 787,669 748,660" fill="#958c8a"/>
<polyline points="748,660 760,625 797,636" fill="none" stroke="#d0c8c8" stroke-opacity="0.6" stroke-width="2" filter="url(#blur1)"/>
<polygon points="748,660 787,669 785,674 746,665" fill="#c8c4c8" fill-opacity="0.5"/>
<polyline points="558,395 438,526 479,541 520,546" fill="none" stroke="#2e2626" stroke-opacity="0.75" stroke-width="1.2" stroke-linejoin="round"/>
<polyline points="387,524 431,535 447,546 535,569" fill="none" stroke="#2e2626" stroke-opacity="0.75" stroke-width="1.2" stroke-linejoin="round"/>
<polyline points="372,550 410,559 420,559 533,587" fill="none" stroke="#2e2626" stroke-opacity="0.75" stroke-width="1.2" stroke-linejoin="round"/>
<polyline points="1099,726 1217,759" fill="none" stroke="#2e2626" stroke-opacity="0.75" stroke-width="2.2" stroke-linejoin="round"/>
<polyline points="1099,726 1087,753 1061,748" fill="none" stroke="#2e2626" stroke-opacity="0.75" stroke-width="2.2" stroke-linejoin="round"/>
<polyline points="1107,640 1097,700 1085,776 1112,792" fill="none" stroke="#c4bec2" stroke-opacity="0.55" stroke-width="5" filter="url(#blur2)"/>
<polyline points="1114,796 1100,842" fill="none" stroke="#3a3232" stroke-opacity="0.45" stroke-width="2" filter="url(#blur1)"/>
<polygon points="1110,636 1262,668 1255,690 1105,660" fill="#b6b0b2" fill-opacity="0.5" filter="url(#blur2)"/>
<polygon points="1208,765 1234,770 1230,812 1206,806" fill="#000" filter="url(#spkh)" opacity="0.7"/>
<ellipse cx="564" cy="551" rx="10" ry="8" fill="#3a3434" opacity="0.7" filter="url(#blur1)"/>
<ellipse cx="563" cy="549" rx="10" ry="8" fill="#a49c9a" stroke="#d0caca" stroke-width="1.5" stroke-opacity="0.7"/>
<ellipse cx="564" cy="549.5" rx="4.5" ry="3.5" fill="#4a3c3a" filter="url(#blur1)"/>
<ellipse cx="1047" cy="718" rx="12" ry="9.6" fill="#3a3434" opacity="0.7" filter="url(#blur1)"/>
<ellipse cx="1046" cy="716" rx="12" ry="9.6" fill="#a49c9a" stroke="#d0caca" stroke-width="1.5" stroke-opacity="0.7"/>
<ellipse cx="1047" cy="716.5" rx="5.4" ry="4.2" fill="#4a3c3a" filter="url(#blur1)"/>
<ellipse cx="1165" cy="556" rx="9" ry="6.75" fill="#6a6060" opacity="0.6" filter="url(#blur1)"/>
<ellipse cx="1164" cy="554" rx="9" ry="6.75" fill="#aaa2a2" filter="url(#blur1)"/>
<ellipse cx="1230" cy="573" rx="9" ry="6.75" fill="#6a6060" opacity="0.6" filter="url(#blur1)"/>
<ellipse cx="1229" cy="571" rx="9" ry="6.75" fill="#aaa2a2" filter="url(#blur1)"/>
<ellipse cx="1302" cy="552" rx="9" ry="6" fill="#c0baba"/><ellipse cx="1304" cy="553" rx="5" ry="3" fill="#3a3232"/>
<path d="M1147,490 l5,-36 q2,-3 4,0 l-3,36z" fill="#c8c2c4" stroke="#6a6264" stroke-width="0.6"/>
<polygon points="1085,470 1110,455 1135,470 1130,492 1090,492" fill="#000" fill-opacity="0.9" filter="url(#spk)"/>
<ellipse cx="1142" cy="495" rx="9" ry="5" fill="#a09898" stroke="#5a5050" stroke-width="1"/>
<polygon points="1140,500 1154,502 1120,628 1108,630" fill="#a8a2a4" fill-opacity="0.6" filter="url(#blur2)"/>
<polyline points="1152,501 1118,624" fill="none" stroke="#2a2424" stroke-width="2"/>
<polygon points="1300,532 1319,535 1298,640 1266,720 1262,800 1236,895 1211,908 1232,800 1248,690 1274,640" fill="#b2acae" filter="url(#blur2)"/>
<polyline points="1302,532 1270,640 1250,700 1234,800 1211,890" fill="none" stroke="#2a2424" stroke-width="2"/>
<polygon points="1126,590 1161,581 1218,597 1283,613 1269,662 1241,662 1126,632 1119,627" fill="#5e5250"/>
<clipPath id="holec"><polygon points="1126,590 1161,581 1218,597 1283,613 1269,662 1241,662 1126,632 1119,627"/></clipPath>
<g clip-path="url(#holec)"><rect x="1100" y="570" width="200" height="100" fill="#000" filter="url(#spkh)"/></g>
<polygon points="1115,630 1269,662 1262,672 1110,640" fill="#b6b0b4" filter="url(#blur2)"/>
<polygon points="1107,637 1258,669 1255,678 1105,646" fill="#aaa4a8" filter="url(#blur2)"/>
<polygon points="680,700 720,706 740,720 760,735 720,730 690,716" fill="#4f4c4a" filter="url(#rough)"/>
<polygon points="850,765 880,760 905,780 895,790 860,785" fill="#4f4c4a" filter="url(#rough)"/>
<polygon points="975,815 995,812 1010,828 1060,840 1075,852 1040,852 1000,838" fill="#4f4c4a" filter="url(#rough)"/>
<polygon points="1130,860 1150,858 1180,880 1180,895 1150,885" fill="#4f4c4a" filter="url(#rough)"/>
<polygon points="522,612 530,603 536,618 525,628" fill="#4f4c4a" filter="url(#rough)"/>
<polygon points="1150,885 1185,900 1200,935 1170,925" fill="#4f4c4a" filter="url(#rough)"/>
<polygon points="1235,800 1250,790 1255,830 1240,850 1228,840" fill="#4f4c4a" filter="url(#rough)"/>
<polygon points="1260,870 1280,880 1300,900 1270,905" fill="#4f4c4a" filter="url(#rough)"/>
<polygon points="1300,620 1318,625 1315,650 1298,660" fill="#4f4c4a" filter="url(#rough)"/>
<polygon points="1270,700 1290,705 1280,730" fill="#4f4c4a" filter="url(#rough)"/>
<path d="M741.0,793.2 L734.5,793.4 L727.9,793.5 L721.5,793.4 L715.0,793.2 L708.6,793.0 L702.3,792.6 L696.0,792.1 L689.7,791.5 L683.5,790.7 L677.4,789.9 L671.3,789.0 L665.3,787.9 L659.4,786.7 L653.5,785.4 L647.7,784.1 L642.0,782.6 L636.4,780.9 L630.9,779.2 L625.4,777.4 L620.1,775.5 L614.8,773.5 L609.6,771.3 L604.5,769.1 L599.6,766.7 L594.7,764.3 L589.9,761.8 L585.3,759.1 L580.7,756.4 L576.3,753.6 L572.0,750.7 L567.8,747.7 L563.7,744.6 L559.7,741.4 L555.9,738.1 L552.2,734.7 L548.6,731.3 L545.2,727.8 L541.8,724.2 L538.7,720.5 L535.6,716.7 L532.7,712.9 L529.9,709.0 L527.3,705.0 L524.8,701.0 L522.4,696.9 L520.2,692.7 L518.1,688.5 L516.2,684.2 L514.4,679.8 L512.8,675.4 L511.3,670.9 L509.9,666.4 L508.7,661.9 L507.7,657.3 L506.8,652.6 L506.1,647.9 L505.5,643.2 L505.0,638.4 L504.8,633.6 L504.6,628.8 L504.6,623.9 L504.8,619.0 L505.1,614.1 L505.6,609.2 L506.2,604.2 L507.0,599.2 L507.9,594.3 L509.0,589.3 L510.2,584.2 L511.6,579.2 L513.1,574.2 L514.8,569.2 L516.6,564.2 L518.6,559.2 L520.7,554.1 L522.9,549.1 L525.3,544.2 L527.9,539.2 L530.5,534.2 L533.3,529.3 L536.3,524.4 L539.4,519.5 L542.6,514.6 L546.0,509.8 L549.4,505.0 L553.1,500.2 L556.8,495.5 L560.7,490.8 L564.6,486.1 L568.8,481.5 L573.0,476.9 L577.3,472.4 L581.8,467.9 L586.4,463.5 L591.0,459.2 L595.8,454.9 L600.7,450.6 L605.7,446.4 L610.8,442.3 L616.0,438.3 L621.3,434.3 L626.7,430.4 L632.2,426.5 L637.7,422.8 L643.4,419.1 L649.1,415.5 L654.9,411.9 L660.8,408.5 L666.7,405.1 L672.7,401.8 L678.8,398.6 L685.0,395.5 L691.2,392.5 L697.4,389.6 L703.7,386.7 L710.1,384.0 L716.5,381.3 L723.0,378.8 L729.5,376.3 L736.0,374.0 L742.6,371.7 L749.2,369.6 L755.8,367.6 L762.4,365.6 L769.1,363.8 L775.8,362.1 L782.5,360.4 L789.2,358.9 L795.9,357.5 L802.6,356.2 L809.3,355.0 L816.1,354.0 L822.8,353.0 L829.5,352.1 L836.1,351.4 L842.8,350.8 L849.4,350.3 L856.1,349.9 L862.6,349.6 L869.2,349.4 L875.7,349.3 L882.2,349.4 L888.6,349.6 L895.0,349.8 L901.4,350.2 L907.7,350.7 L914.0,351.4 L920.1,352.1 L926.3,352.9 L932.3,353.9 L938.3,354.9 L944.3,356.1 L950.1,357.4 L955.9,358.8 L961.6,360.3 L967.2,361.9 L972.8,363.6 L978.2,365.5 L983.6,367.4 L988.8,369.4 L994.0,371.6 L999.1,373.8 L1004.0,376.2 L1008.9,378.6 L1013.7,381.1 L1018.3,383.8 L1022.9,386.5 L1027.3,389.3 L1031.6,392.2 L1035.8,395.3 L1039.9,398.4 L1043.8,401.6 L1047.6,404.8 L1051.4,408.2 L1054.9,411.6 L1058.4,415.2 L1061.7,418.8 L1064.9,422.5 L1067.9,426.2 L1070.8,430.1 L1073.6,434.0 L1076.3,437.9 L1078.7,442.0 L1081.1,446.1 L1083.3,450.3 L1085.4,454.5 L1087.3,458.8 L1089.1,463.2 L1090.7,467.6 L1092.2,472.0 L1093.5,476.6 L1094.7,481.1 L1095.7,485.7 L1096.6,490.4 L1097.4,495.1 L1097.9,499.8 L1098.4,504.6 L1098.7,509.4 L1098.8,514.2" fill="none" stroke="#e0a4d4" stroke-width="1.3"/>
<path d="M1003.1,855.0 L1002.4,857.8 L1001.7,860.5 L1000.8,863.1 L999.9,865.6 L998.8,868.0 L997.7,870.2 L996.5,872.4 L995.2,874.5 L993.8,876.5 L992.3,878.3 L990.7,880.1 L989.0,881.8 L987.3,883.3 L985.4,884.7 L983.5,886.1 L981.5,887.3 L979.4,888.4 L977.2,889.4 L975.0,890.3 L972.6,891.0 L970.2,891.7 L967.7,892.2 L965.1,892.7 L962.4,893.0 L959.7,893.2 L956.9,893.3 L954.0,893.2 L951.1,893.1 L948.0,892.9 L944.9,892.5 L941.8,892.0 L938.5,891.4 L935.3,890.7 L931.9,889.9 L928.5,889.0 L925.0,888.0 L921.5,886.8 L917.9,885.6 L914.2,884.2 L910.5,882.7 L906.8,881.1 L902.9,879.4 L899.1,877.6 L895.2,875.7 L891.2,873.7 L887.2,871.6 L883.2,869.4 L879.1,867.0 L875.0,864.6 L870.9,862.1 L866.7,859.5 L862.5,856.7 L858.2,853.9 L853.9,851.0 L849.6,848.0 L845.3,844.9 L840.9,841.7 L836.6,838.4 L832.2,835.0 L827.7,831.6 L823.3,828.0 L818.9,824.4 L814.4,820.7 L809.9,816.9 L805.5,813.0 L801.0,809.0 L796.5,805.0 L792.0,800.9 L787.6,796.7 L783.1,792.5 L778.6,788.2 L774.1,783.8 L769.7,779.3 L765.2,774.8 L760.8,770.2 L756.4,765.6 L751.9,760.9 L747.6,756.2 L743.2,751.4 L738.8,746.6 L734.5,741.7 L730.2,736.7 L726.0,731.7 L721.7,726.7 L717.5,721.7 L713.3,716.6 L709.2,711.4 L705.1,706.3 L701.0,701.1 L697.0,695.9 L693.0,690.6 L689.1,685.3 L685.2,680.1 L681.4,674.7 L677.6,669.4 L673.9,664.1 L670.2,658.7 L666.5,653.4 L663.0,648.0 L659.5,642.6 L656.0,637.3 L652.6,631.9 L649.3,626.5 L646.0,621.2 L642.8,615.8 L639.7,610.5 L636.6,605.1 L633.6,599.8 L630.7,594.5 L627.8,589.3 L625.0,584.0 L622.3,578.8 L619.7,573.6 L617.1,568.4 L614.7,563.2 L612.3,558.1 L610.0,553.1 L607.7,548.0 L605.6,543.0 L603.5,538.1 L601.5,533.2 L599.6,528.3 L597.8,523.5 L596.1,518.7 L594.5,514.0 L592.9,509.4 L591.5,504.8 L590.1,500.3 L588.8,495.8 L587.6,491.4 L586.5,487.1 L585.5,482.8 L584.6,478.6 L583.8,474.4 L583.1,470.4 L582.5,466.4 L581.9,462.5 L581.5,458.7 L581.1,454.9 L580.9,451.3 L580.7,447.7 L580.7,444.2 L580.7,440.8 L580.8,437.5 L581.0,434.2 L581.4,431.1 L581.8,428.1 L582.3,425.1 L582.9,422.2 L583.5,419.5 L584.3,416.8 L585.2,414.3 L586.2,411.8 L587.2,409.4 L588.4,407.2 L589.6,405.0 L591.0,403.0 L592.4,401.0 L593.9,399.2 L595.5,397.5 L597.2,395.8 L599.0,394.3 L600.9,392.9 L602.8,391.6 L604.8,390.4 L607.0,389.4 L609.2,388.4 L611.5,387.5 L613.8,386.8 L616.3,386.2 L618.8,385.7 L621.4,385.3 L624.1,385.0 L626.8,384.8 L629.7,384.7 L632.6,384.8 L635.5,384.9 L638.6,385.2 L641.7,385.6 L644.9,386.1 L648.1,386.7 L651.4,387.5 L654.8,388.3 L658.2,389.3 L661.7,390.3 L665.3,391.5 L668.9,392.8 L672.5,394.2 L676.3,395.7 L680.0,397.3 L683.9,399.0 L687.7,400.9 L691.6,402.8 L695.6,404.8 L699.6,407.0 L703.7,409.2 L707.7,411.6 L711.9,414.0 L716.0,416.6" fill="none" stroke="#b4b4ee" stroke-width="1.3"/>
<path d="M853.3,383.2 L859.2,380.9 L865.1,378.7 L871.0,376.6 L876.9,374.7 L882.8,373.0 L888.7,371.4 L894.6,370.0 L900.4,368.8 L906.3,367.7 L912.1,366.8 L917.9,366.0 L923.6,365.4 L929.3,365.0 L935.0,364.7 L940.6,364.6 L946.2,364.7 L951.8,364.9 L957.2,365.3 L962.7,365.9 L968.1,366.6 L973.4,367.5 L978.6,368.6 L983.8,369.8 L988.9,371.2 L994.0,372.7 L999.0,374.4 L1003.8,376.3 L1008.7,378.3 L1013.4,380.5 L1018.0,382.8 L1022.6,385.3 L1027.0,388.0 L1031.4,390.8 L1035.7,393.7 L1039.8,396.8 L1043.9,400.1 L1047.8,403.4 L1051.7,407.0 L1055.4,410.6 L1059.0,414.4 L1062.6,418.4 L1066.0,422.5 L1069.2,426.7 L1072.4,431.0 L1075.4,435.5 L1078.4,440.1 L1081.2,444.8 L1083.8,449.6 L1086.4,454.5 L1088.8,459.6 L1091.0,464.8 L1093.2,470.0 L1095.2,475.4 L1097.1,480.9 L1098.8,486.5 L1100.4,492.1 L1101.9,497.9 L1103.2,503.8 L1104.4,509.7 L1105.4,515.7 L1106.3,521.8 L1107.1,527.9 L1107.7,534.2 L1108.2,540.5 L1108.5,546.8 L1108.7,553.3 L1108.8,559.7 L1108.7,566.3 L1108.4,572.8 L1108.1,579.4 L1107.5,586.1 L1106.9,592.8 L1106.1,599.5 L1105.1,606.3 L1104.0,613.0 L1102.8,619.8 L1101.4,626.7 L1099.9,633.5 L1098.3,640.3 L1096.5,647.1 L1094.6,654.0 L1092.6,660.8 L1090.4,667.6 L1088.1,674.4 L1085.6,681.2 L1083.0,688.0 L1080.3,694.8 L1077.5,701.5 L1074.6,708.2 L1071.5,714.9 L1068.3,721.5 L1065.0,728.0 L1061.5,734.6 L1058.0,741.1 L1054.3,747.5 L1050.6,753.8 L1046.7,760.1 L1042.7,766.4 L1038.6,772.5 L1034.4,778.6 L1030.1,784.6 L1025.7,790.6 L1021.2,796.4 L1016.7,802.2 L1012.0,807.9 L1007.2,813.4 L1002.4,818.9 L997.5,824.3 L992.5,829.6 L987.4,834.8 L982.3,839.8 L977.1,844.8 L971.8,849.6 L966.5,854.3 L961.1,858.9 L955.6,863.4 L950.1,867.7 L944.6,871.9 L939.0,876.0 L933.3,880.0 L927.6,883.8 L921.9,887.5 L916.2,891.0 L910.4,894.4 L904.6,897.6 L898.7,900.7 L892.9,903.7 L887.0,906.5 L881.1,909.2 L875.2,911.6 L869.3,914.0 L863.4,916.2 L857.5,918.2 L851.6,920.1 L845.7,921.8 L839.8,923.3 L834.0,924.7 L828.1,926.0 L822.3,927.0 L816.5,927.9 L810.7,928.7 L805.0,929.2 L799.2,929.7 L793.6,929.9 L787.9,930.0 L782.4,929.9 L776.8,929.6 L771.3,929.2 L765.9,928.6 L760.5,927.9 L755.2,927.0 L750.0,925.9 L744.8,924.7 L739.7,923.3 L734.7,921.7 L729.7,920.0 L724.8,918.1 L720.0,916.0 L715.3,913.8 L710.7,911.5 L706.1,909.0 L701.7,906.3 L697.3,903.5 L693.1,900.5 L688.9,897.4 L684.9,894.2 L680.9,890.8 L677.1,887.2 L673.4,883.5 L669.8,879.7 L666.3,875.8 L662.9,871.7 L659.6,867.4 L656.5,863.1 L653.4,858.6 L650.5,854.0 L647.7,849.3 L645.1,844.4 L642.6,839.5 L640.2,834.4 L637.9,829.2 L635.8,824.0 L633.8,818.6 L631.9,813.1 L630.2,807.5 L628.6,801.8 L627.2,796.0 L625.9,790.2 L624.7,784.3 L623.7,778.2 L622.8,772.1 L622.0,766.0 L621.4,759.7 L621.0,753.4 L620.7,747.1 L620.5,740.6 L620.4,734.1 L620.6,727.6 L620.8,721.0" fill="none" stroke="url(#tgrad)" stroke-width="1.3"/>
</g></svg>
<div id="log" class="a"></div>
<div class="a" style="left:0;top:100px;width:1640px;height:3px;background:linear-gradient(#b4b4b4,rgba(120,120,120,0.4) 60%,rgba(0,0,0,0))"></div>
<div class="a" style="left:0;top:101px;width:2px;height:1041px;background:rgba(255,255,255,0.5)"></div>
<div class="a" style="left:1637px;top:101px;width:3px;height:1041px;background:linear-gradient(90deg,rgba(255,255,255,0.45),rgba(255,255,255,0.7))"></div>
<div class="a" style="left:0;top:1140px;width:1640px;height:2px;background:rgba(255,255,255,0.5)"></div>
<div id="panel" class="a"></div>
<div class="a" style="left:1648px;top:105px;font-size:13px;color:#2a2a2a">Project_1</div>
<svg class="a" style="left:1885px;top:104px" width="35" height="16" viewBox="1885 104 35 16">
<g fill="#e4e4e4" stroke="#8a8a8a" stroke-width="0.8"><rect x="1889.5" y="107.5" width="10" height="10" rx="1.5"/><rect x="1906.5" y="107.5" width="10" height="10" rx="1.5"/></g>
<g fill="none" stroke="#555" stroke-width="0.9"><rect x="1891.5" y="111.5" width="4" height="4"/><rect x="1893.5" y="109.5" width="4" height="4"/></g>
<g stroke="#333" stroke-width="1.5"><line x1="1909" y1="110" x2="1914" y2="115"/><line x1="1914" y1="110" x2="1909" y2="115"/></g>
</svg>
<div class="a box" style="left:1655px;top:134px;width:256px;height:654px"></div>
<div class="a box" style="left:1655px;top:806px;width:256px;height:327px"></div>
<div class="a" style="left:1688px;top:173px;width:222px;height:19px;background:#ffff00"></div>
<svg class="a" style="left:1655px;top:134px" width="40" height="60" viewBox="1655 134 40 60">
<g fill="#141414"><path d="M1661,140 l5.5,5 l-5.5,5z"/><path d="M1661,159 l5.5,5 l-5.5,5z"/><path d="M1661,178 l5.5,5 l-5.5,5z"/></g>
<g fill="#e6e6e6" stroke="#a8a8a8" stroke-width="0.8"><rect x="1669.5" y="136.5" width="15" height="15"/><rect x="1669.5" y="155.5" width="15" height="15"/><rect x="1669.5" y="174.5" width="15" height="15"/></g>
<g fill="none" stroke="#333" stroke-width="0.9"><path d="M1671,147 q6,1.5 12,-3"/><path d="M1671,166 q6,1.5 12,-3"/></g>
<path d="M1671,182 q6,-5 12,0 q-6,5 -12,0z" fill="#22dd22" stroke="#333" stroke-width="0.6"/><circle cx="1676.5" cy="181.5" r="2" fill="#000"/><circle cx="1676" cy="181" r="0.7" fill="#fff"/>
</svg>
<div class="a tree" style="left:1691px;top:137px">0</div><div class="a tree" style="left:1705px;top:137px">pset-L2.ply</div>
<div class="a tree" style="left:1691px;top:156px">1</div><div class="a tree" style="left:1705px;top:156px">surface-L2.ply</div>
<div class="a tree" style="left:1691px;top:175px;color:#1c1ca8">2</div><div class="a tree" style="left:1705px;top:175px;color:#1c1ca8">surface-L2-clean.ply</div>
<div class="a mono" style="left:1660px;top:812px">Opened mesh
/home/rasmus/DarktableExports/mve/pset-
L2.ply in 4804 msec
All files opened in 4804 msec
Opened mesh
/home/rasmus/DarktableExports/mve/surface-
L2.ply in 1037 msec
All files opened in 1038 msec
Opened mesh
/home/rasmus/DarktableExports/mve/surface-
L2-clean.ply in 578 msec</div>
<div class="a mono" style="left:1660px;top:948px">All files opened in 578 msec</div>

<div id="status" class="a"></div>
<div class="a" style="left:961px;top:1145px;width:957px;height:25px;border:1px solid #8c8c8c;border-radius:2px;background:linear-gradient(#d2d2d2,#e2e2e2 60%,#f6f6f6)"></div>
<div class="a" style="left:961px;top:1145px;width:5px;height:25px;border:1px solid #5e8a4a;border-radius:2px;background:#a8d08a"></div>
<div class="a" style="left:0;top:1171px;width:1920px;height:2px;background:#666"></div>
<div class="a" style="left:1642px;top:609px;width:2px;height:25px;background:repeating-linear-gradient(#888 0 2px,transparent 2px 5.5px)"></div>

<div class="a lt" style="left:164px;top:1087px">FOV: 60</div>
<div class="a lt" style="left:164px;top:1102px">FPS:&nbsp;&nbsp;&nbsp;&nbsp; 9.2</div>
<div class="a lt" style="left:820px;top:1087px">Current Mesh: surface-L2-clean.ply<br>Vertices: 487272 (17285141)<br>Faces: 924528 (2987343)</div>
<div class="a lt" style="left:820px;top:1132px;height:8px;overflow:hidden">VO VC</div>
<!-- cursor -->
<svg class="a" style="left:1650px;top:1070px" width="18" height="24" viewBox="0 0 18 24"><path d="M2.5,1.5 L2.5,17 L6.2,13.6 L9,20 L11.6,18.8 L8.9,12.6 L13.8,12.4z" fill="#fff" stroke="#000" stroke-width="1.3" stroke-linejoin="round"/></svg>
</body></html>
